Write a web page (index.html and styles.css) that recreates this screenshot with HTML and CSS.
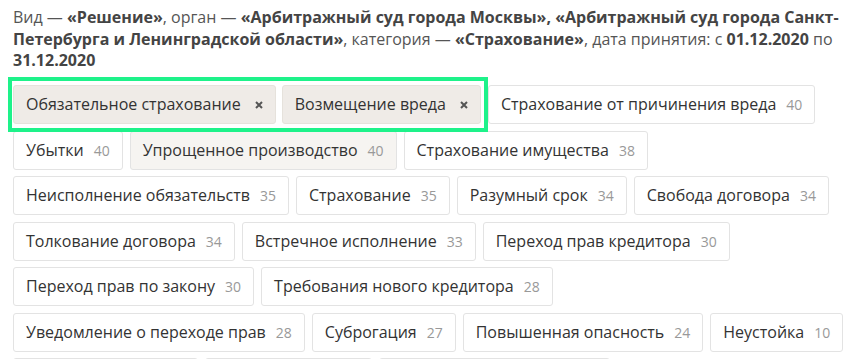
FILE: index.html
```html
<!DOCTYPE html>
<html lang="ru">
  <head>
    <meta charset="UTF-8" />
    <meta name="viewport" content="width=device-width, initial-scale=1.0" />
    <title>Фильтр по тегам</title>
    <link rel="stylesheet" href="styles.css">
  </head>
  <body>
    <div class="page">
      <p class="filter-summary">
        Вид — <b>«Решение»</b>, орган — <b>«Арбитражный суд города Москвы», «Арбитражный суд города Санкт-<br>Петербурга и Ленинградской области»</b>, категория — <b>«Страхование»</b>, дата принятия: с <b>01.12.2020</b> по<br><b>31.12.2020</b>
      </p>

      <ul class="tag-list">
        <li class="tag-group">
          <span class="tag tag-active">Обязательное страхование <button class="tag-remove" type="button" aria-label="Убрать"><svg viewBox="0 0 8 8" width="8" height="8"><path d="M1 1 7 7M7 1 1 7" /></svg></button></span>
          <span class="tag tag-active">Возмещение вреда <button class="tag-remove" type="button" aria-label="Убрать"><svg viewBox="0 0 8 8" width="8" height="8"><path d="M1 1 7 7M7 1 1 7" /></svg></button></span>
        </li>
        <li class="tag">Страхование от причинения вреда <span class="tag-count">40</span></li>
        <li class="tag">Убытки <span class="tag-count">40</span></li>
        <li class="tag tag-hover">Упрощенное производство <span class="tag-count">40</span></li>
        <li class="tag">Страхование имущества <span class="tag-count">38</span></li>
        <li class="tag">Неисполнение обязательств <span class="tag-count">35</span></li>
        <li class="tag">Страхование <span class="tag-count">35</span></li>
        <li class="tag">Разумный срок <span class="tag-count">34</span></li>
        <li class="tag">Свобода договора <span class="tag-count">34</span></li>
        <li class="tag">Толкование договора <span class="tag-count">34</span></li>
        <li class="tag">Встречное исполнение <span class="tag-count">33</span></li>
        <li class="tag">Переход прав кредитора <span class="tag-count">30</span></li>
        <li class="tag">Переход прав по закону <span class="tag-count">30</span></li>
        <li class="tag">Требования нового кредитора <span class="tag-count">28</span></li>
        <li class="tag">Уведомление о переходе прав <span class="tag-count">28</span></li>
        <li class="tag">Суброгация <span class="tag-count">27</span></li>
        <li class="tag">Повышенная опасность <span class="tag-count">24</span></li>
        <li class="tag">Неустойка <span class="tag-count">10</span></li>
        <li class="tag">Страховой случай <span class="tag-count">9</span></li>
        <li class="tag">Страховой риск <span class="tag-count">8</span></li>
        <li class="tag">Страховое возмещение <span class="tag-count">8</span></li>
      </ul>
    </div>
  </body>
</html>
```

FILE: styles.css
```css
* {
  box-sizing: border-box;
}

body {
  margin: 0;
  font-family: "Open Sans", "Noto Sans", sans-serif;
  font-size: 16px;
  color: #333;
  background-color: #fff;
}

.page {
  padding: 7px 8px 0 13px;
}

.filter-summary {
  margin: 0;
  line-height: 21.5px;
  color: #555;
}

.filter-summary b {
  font-weight: 700;
  color: #444;
}

.tag-list {
  display: flex;
  flex-wrap: wrap;
  gap: 6.5px 7px;
  margin: 13.5px 0 0;
  padding: 0;
  list-style: none;
}

/* выбранные теги обведены рамкой-подсветкой */
.tag-group {
  position: relative;
  display: flex;
  gap: 6px;
}

.tag-group::after {
  content: "";
  position: absolute;
  top: -8px;
  right: -7px;
  bottom: -8px;
  left: -5px;
  border: 4px solid #1ef28a;
  pointer-events: none;
}

.tag {
  display: flex;
  align-items: center;
  height: 39px;
  padding: 0 12px;
  line-height: 21px;
  white-space: nowrap;
  border: 1px solid #e3e3e3;
  border-radius: 3px;
  background-color: #fff;
}

.tag-active {
  border-color: #e6e2dc;
  background-color: #efebe7;
}

.tag-hover {
  background-color: #f6f4f1;
}

.tag-count {
  margin-left: 10px;
  font-size: 14px;
  color: #999;
}

.tag-remove {
  display: flex;
  align-items: center;
  margin-left: 14px;
  padding: 0;
  border: none;
  background: none;
  cursor: pointer;
}

.tag-remove path {
  stroke: #555;
  stroke-width: 2;
  fill: none;
}
```
